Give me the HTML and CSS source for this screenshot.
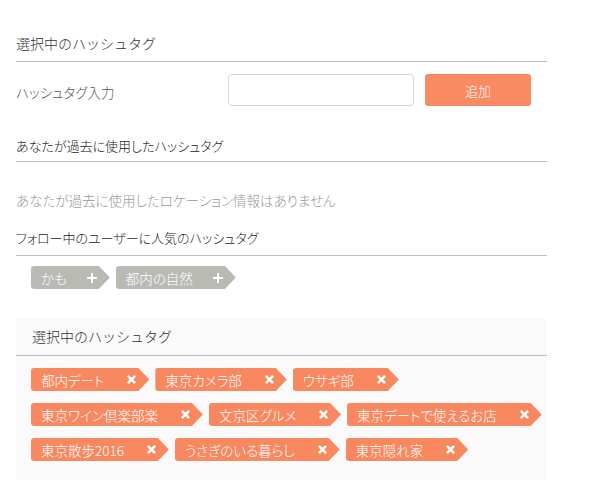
FILE: index.html
```html
<!DOCTYPE html>
<html lang="ja">
<head>
    <meta charset="UTF-8">
    <meta name="viewport" content="width=device-width, initial-scale=1.0">
    <title>ハッシュタグ</title>
    <link rel="stylesheet" href="styles.css">
</head>
<body>
    <div class="panel">
        <h2 class="panel-title">選択中のハッシュタグ</h2>

        <div class="input-row">
            <label class="input-label" for="hashtag-input">ハッシュタグ入力</label>
            <input type="text" id="hashtag-input" class="hashtag-input">
            <button class="add-button">追加</button>
        </div>

        <h3 class="sub-title sub-title-past">あなたが過去に使用したハッシュタグ</h3>
        <p class="empty-text">あなたが過去に使用したロケーション情報はありません</p>

        <h3 class="sub-title sub-title-popular">フォロー中のユーザーに人気のハッシュタグ</h3>
        <div class="tag-list tag-list-popular">
            <span class="tag tag-gray">かも<svg class="tag-icon" viewBox="0 0 10 10"><path d="M5 0V10M0 5H10"/></svg></span>
            <span class="tag tag-gray">都内の自然<svg class="tag-icon" viewBox="0 0 10 10"><path d="M5 0V10M0 5H10"/></svg></span>
        </div>

        <div class="selected-box">
            <h2 class="selected-title">選択中のハッシュタグ</h2>
            <div class="tag-list tag-list-selected">
                <span class="tag tag-orange">都内デート<svg class="tag-icon" viewBox="0 0 10 10"><path d="M1 1L9 9M9 1L1 9"/></svg></span>
                <span class="tag tag-orange">東京カメラ部<svg class="tag-icon" viewBox="0 0 10 10"><path d="M1 1L9 9M9 1L1 9"/></svg></span>
                <span class="tag tag-orange">ウサギ部<svg class="tag-icon" viewBox="0 0 10 10"><path d="M1 1L9 9M9 1L1 9"/></svg></span>
                <span class="tag tag-orange">東京ワイン倶楽部楽<svg class="tag-icon" viewBox="0 0 10 10"><path d="M1 1L9 9M9 1L1 9"/></svg></span>
                <span class="tag tag-orange">文京区グルメ<svg class="tag-icon" viewBox="0 0 10 10"><path d="M1 1L9 9M9 1L1 9"/></svg></span>
                <span class="tag tag-orange">東京デートで使えるお店<svg class="tag-icon" viewBox="0 0 10 10"><path d="M1 1L9 9M9 1L1 9"/></svg></span>
                <span class="tag tag-orange">東京散歩2016<svg class="tag-icon" viewBox="0 0 10 10"><path d="M1 1L9 9M9 1L1 9"/></svg></span>
                <span class="tag tag-orange">うさぎのいる暮らし<svg class="tag-icon" viewBox="0 0 10 10"><path d="M1 1L9 9M9 1L1 9"/></svg></span>
                <span class="tag tag-orange">東京隠れ家<svg class="tag-icon" viewBox="0 0 10 10"><path d="M1 1L9 9M9 1L1 9"/></svg></span>
            </div>
        </div>
    </div>
</body>
</html>
```

FILE: styles.css
```css
body {
    margin: 0;
    font-family: "Noto Sans CJK JP", "Noto Sans", sans-serif;
    font-weight: 300;
    background: #fff;
    color: #333;
}

.panel {
    width: 531px;
    padding: 33px 0 0 16px;
}

.panel-title {
    margin: 0;
    padding-bottom: 8px;
    font-size: 14px;
    font-weight: 300;
    line-height: 20px;
    color: #333;
    border-bottom: 1px solid #bdbdbd;
}

.input-row {
    display: flex;
    align-items: center;
    margin-top: 12px;
    height: 32px;
}

.input-label {
    width: 212px;
    font-size: 13.5px;
    color: #555;
    font-feature-settings: "palt";
    padding-top: 3px;
}

.hashtag-input {
    width: 186px;
    height: 32px;
    box-sizing: border-box;
    border: 1px solid #d6d6d6;
    border-radius: 4px;
    padding: 0 8px;
    margin: 0;
}

.add-button {
    margin-left: 11px;
    width: 106px;
    height: 32px;
    border: none;
    border-radius: 3px;
    background-color: #f98a62;
    color: #fff;
    font-family: inherit;
    font-weight: 300;
    font-size: 13px;
    cursor: pointer;
}

.sub-title {
    margin: 0;
    font-size: 13px;
    font-weight: 300;
    line-height: 18px;
    color: #222;
    font-feature-settings: "palt";
    border-bottom: 1px solid #bdbdbd;
}

.sub-title-past {
    margin-top: 31px;
    padding-bottom: 6px;
}

.sub-title-popular {
    margin-top: 20px;
    padding-bottom: 8px;
}

.empty-text {
    margin: 29px 0 0;
    font-size: 13.5px;
    line-height: 18px;
    color: #999;
    font-feature-settings: "palt";
}

.tag-list {
    display: flex;
    flex-wrap: wrap;
    gap: 12px 6px;
    padding-left: 15px;
}

.tag-list-popular {
    margin-top: 10px;
}

.tag {
    display: inline-flex;
    align-items: center;
    height: 23px;
    padding: 0 13px 0 10px;
    border-radius: 3px 0 0 3px;
    font-size: 13.5px;
    color: #fff;
    font-feature-settings: "palt";
    clip-path: polygon(0 0, calc(100% - 11px) 0, 100% 50%, calc(100% - 11px) 100%, 0 100%);
}

.tag-gray {
    background-color: #babab4;
}

.tag-orange {
    background-color: #f8885f;
}

.tag-icon {
    width: 9px;
    height: 9px;
    margin-left: 23px;
    fill: none;
    stroke: #fff;
    stroke-width: 2.8;
}

.tag-gray .tag-icon {
    width: 10px;
    height: 10px;
    margin-left: 20px;
    stroke-width: 2;
}

.selected-box {
    margin-top: 29px;
    background-color: #fafafa;
    border-radius: 4px;
    padding-bottom: 19px;
}

.selected-title {
    margin: 0;
    padding: 8px 0 9px 16px;
    font-size: 14px;
    font-weight: 300;
    line-height: 20px;
    color: #333;
    border-bottom: 1px solid #bdbdbd;
}

.tag-list-selected {
    margin-top: 12px;
}
```
